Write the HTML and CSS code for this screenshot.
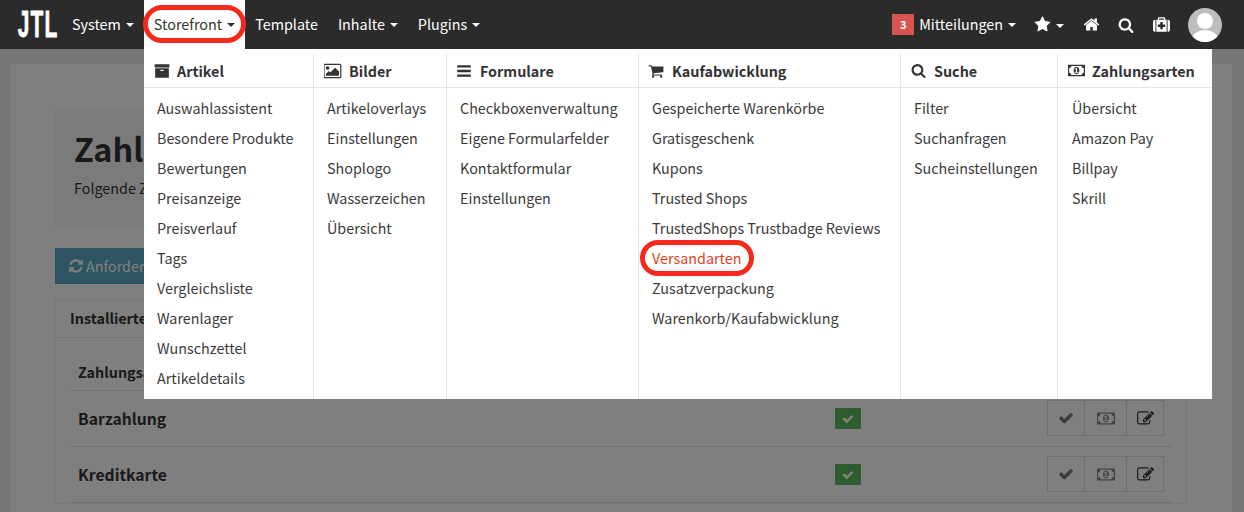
FILE: index.html
```html
<!DOCTYPE html>
<html lang="de">
<head>
<meta charset="utf-8">
<title>JTL Shop Admin</title>
<link rel="stylesheet" href="styles.css">
</head>
<body>
<svg class="sprite" xmlns="http://www.w3.org/2000/svg">
<symbol id="i-search" viewBox="0 0 1792 1792"><path d="M1216 832q0-185-131.5-316.5t-316.5-131.5-316.5 131.5-131.5 316.5 131.5 316.5 316.5 131.5 316.5-131.5 131.5-316.5zm512 832q0 52-38 90t-90 38q-54 0-90-38l-343-342q-179 124-399 124-143 0-273.5-55.5t-225-150-150-225-55.5-273.5 55.5-273.5 150-225 225-150 273.5-55.5 273.5 55.5 225 150 150 225 55.5 273.5q0 220-124 399l343 343q37 37 37 90z"/></symbol>
<symbol id="i-check" viewBox="0 0 1792 1792"><path d="M1671 566q0 40-28 68l-724 724-136 136q-28 28-68 28t-68-28l-136-136-362-362q-28-28-28-68t28-68l136-136q28-28 68-28t68 28l294 295 656-657q28-28 68-28t68 28l136 136q28 28 28 68z"/></symbol>
<symbol id="i-star" viewBox="0 0 1792 1792"><path d="M1728 647q0 22-26 48l-363 354 86 500q1 7 1 20 0 21-10.5 35.5t-30.5 14.5q-19 0-40-12l-449-236-449 236q-22 12-40 12-21 0-31.5-14.5t-10.5-35.5q0-6 2-20l86-500-364-354q-25-27-25-48 0-37 56-46l502-73 225-455q19-41 49-41t49 41l225 455 502 73q56 9 56 46z"/></symbol>
<symbol id="i-home" viewBox="0 0 1792 1792"><path d="M1472 992v480q0 26-19 45t-45 19h-384v-384h-256v384h-384q-26 0-45-19t-19-45v-480q0-1 .5-3t.5-3l575-474 575 474q1 2 1 6zm223-69l-62 74q-8 9-21 11h-3q-13 0-21-7l-692-577-692 577q-12 8-24 7-13-2-21-11l-62-74q-8-10-7-23.5t11-21.5l719-599q32-26 76-26t76 26l244 204v-195q0-14 9-23t23-9h192q14 0 23 9t9 23v408l219 182q10 8 11 21.5t-7 23.5z"/></symbol>
<symbol id="i-bars" viewBox="0 0 1792 1792"><path d="M1664 1344v128q0 26-19 45t-45 19h-1408q-26 0-45-19t-19-45v-128q0-26 19-45t45-19h1408q26 0 45 19t19 45zm0-512v128q0 26-19 45t-45 19h-1408q-26 0-45-19t-19-45v-128q0-26 19-45t45-19h1408q26 0 45 19t19 45zm0-512v128q0 26-19 45t-45 19h-1408q-26 0-45-19t-19-45v-128q0-26 19-45t45-19h1408q26 0 45 19t19 45z"/></symbol>
<symbol id="i-cart" viewBox="0 0 1792 1792"><path d="M704 1536q0 52-38 90t-90 38-90-38-38-90 38-90 90-38 90 38 38 90zm896 0q0 52-38 90t-90 38-90-38-38-90 38-90 90-38 90 38 38 90zm128-1088v512q0 24-16.5 42.5t-40.5 21.5l-1044 122q13 60 13 70 0 16-24 64h920q26 0 45 19t19 45-19 45-45 19h-1024q-26 0-45-19t-19-45q0-11 8-31.5t16-36 21.5-40 15.5-29.5l-177-823h-204q-26 0-45-19t-19-45 19-45 45-19h256q16 0 28.5 6.5t19.5 15.5 13 24.5 8 26 5.5 29.5 4.5 26h1201q26 0 45 19t19 45z"/></symbol>
<symbol id="i-archive" viewBox="0 0 1792 1792"><path d="M1088 832q0-26-19-45t-45-19h-256q-26 0-45 19t-19 45 19 45 45 19h256q26 0 45-19t19-45zm576-192v960q0 26-19 45t-45 19h-1408q-26 0-45-19t-19-45v-960q0-26 19-45t45-19h1408q26 0 45 19t19 45zm64-448v256q0 26-19 45t-45 19h-1536q-26 0-45-19t-19-45v-256q0-26 19-45t45-19h1536q26 0 45 19t19 45z"/></symbol>
<symbol id="i-refresh" viewBox="0 0 1792 1792"><path d="M1639 1056q0 5-1 7-64 268-268 434.5t-478 166.5q-146 0-282.5-55t-243.5-157l-129 129q-19 19-45 19t-45-19-19-45v-448q0-26 19-45t45-19h448q26 0 45 19t19 45-19 45l-137 137q71 66 161 102t187 36q134 0 250-65t186-179q11-17 53-117 8-23 30-23h192q13 0 22.5 9.5t9.5 22.5zm25-800v448q0 26-19 45t-45 19h-448q-26 0-45-19t-19-45 19-45l138-138q-148-137-349-137-134 0-250 65t-186 179q-11 17-53 117-8 23-30 23h-199q-13 0-22.5-9.5t-9.5-22.5v-7q65-268 270-434.5t480-166.5q146 0 284 55.5t245 156.5l130-129q19-19 45-19t45 19 19 45z"/></symbol>
<symbol id="i-image" viewBox="0 0 1920 1792"><path d="M576 576q0 80-56 136t-136 56-136-56-56-136 56-136 136-56 136 56 56 136zm1024 384v448h-1408v-192l320-320 160 160 512-512zm96-704h-1600q-13 0-22.5 9.5t-9.5 22.5v1216q0 13 9.5 22.5t22.5 9.5h1600q13 0 22.5-9.5t9.5-22.5v-1216q0-13-9.5-22.5t-22.5-9.5zm160 32v1216q0 66-47 113t-113 47h-1600q-66 0-113-47t-47-113v-1216q0-66 47-113t113-47h1600q66 0 113 47t47 113z"/></symbol>
<symbol id="i-money" viewBox="0 0 1920 1792"><path d="M768 1152h384v-96h-128v-448h-114l-148 137 77 80q42-37 55-57h2v288h-128v96zm512-256q0 70-21 142t-59.5 134-101.5 101-138 39-138-39-101.5-101-59.5-134-21-142 21-142 59.5-134 101.5-101 138-39 138 39 101.5 101 59.5 134 21 142zm512 256v-512q-106 0-181-75t-75-181h-1152q0 106-75 181t-181 75v512q106 0 181 75t75 181h1152q0-106 75-181t181-75zm128-832v1152q0 26-19 45t-45 19h-1792q-26 0-45-19t-19-45v-1152q0-26 19-45t45-19h1792q26 0 45 19t19 45z"/></symbol>
<symbol id="i-medkit" viewBox="0 0 1792 1792"><path d="M1280 1120v-192q0-14-9-23t-23-9h-224v-224q0-14-9-23t-23-9h-192q-14 0-23 9t-9 23v224h-224q-14 0-23 9t-9 23v192q0 14 9 23t23 9h224v224q0 14 9 23t23 9h192q14 0 23-9t9-23v-224h224q14 0 23-9t9-23zm-640-736h512v-128h-512v128zm-384 0v1280h-32q-92 0-158-66t-66-158v-832q0-92 66-158t158-66h32zm1184 0v1280h-1088v-1280h160v-160q0-40 28-68t68-28h576q40 0 68 28t28 68v160h160zm352 224v832q0 92-66 158t-158 66h-32v-1280h32q92 0 158 66t66 158z"/></symbol>
<symbol id="i-edit" viewBox="0 0 1792 1792"><path d="M888 1184l116-116-152-152-116 116v56h96v96h56zm440-720q-16-16-33 1l-350 350q-17 17-1 33t33-1l350-350q17-17 1-33zm80 594v190q0 119-84.5 203.5t-203.5 84.5h-832q-119 0-203.5-84.5t-84.5-203.5v-832q0-119 84.5-203.5t203.5-84.5h832q63 0 117 25 15 7 18 23 3 17-9 29l-49 49q-14 14-32 8-23-6-45-6h-832q-66 0-113 47t-47 113v832q0 66 47 113t113 47h832q66 0 113-47t47-113v-126q0-13 9-22l64-64q15-15 35-7t20 29zm-96-738l288 288-672 672h-288v-288zm444 132l-92 92-288-288 92-92q28-28 68-28t68 28l152 152q28 28 28 68t-28 68z"/></symbol>
</svg>

<header class="navbar">
  <a class="logo"><span class="logo-text">JTL</span></a>
  <nav class="nav-main">
    <a class="nav-item">System<i class="caret"></i></a>
    <a class="nav-item is-open">Storefront<i class="caret"></i></a>
    <a class="nav-item">Template</a>
    <a class="nav-item">Inhalte<i class="caret"></i></a>
    <a class="nav-item">Plugins<i class="caret"></i></a>
  </nav>
  <div class="nav-right">
    <span class="badge-count">3</span>
    <a class="nav-link">Mitteilungen<i class="caret"></i></a>
    <a class="nav-icon nav-star"><svg class="icon-star"><use href="#i-star"/></svg><i class="caret caret-small"></i></a>
    <a class="nav-icon nav-home"><svg class="icon-home"><use href="#i-home"/></svg></a>
    <a class="nav-icon nav-search"><svg class="icon-search"><use href="#i-search"/></svg></a>
    <a class="nav-icon nav-medkit"><svg class="icon-medkit"><use href="#i-medkit"/></svg></a>
    <span class="avatar">
      <svg viewBox="0 0 34 34"><circle cx="17" cy="13" r="8"/><ellipse cx="17" cy="31" rx="13" ry="9"/></svg>
    </span>
  </div>
</header>

<main class="page">
  <section class="card">
    <div class="jumbotron">
      <h1>Zahlungsarten</h1>
      <p>Folgende Zahlungsarten sind verfügbar</p>
    </div>
    <a class="btn-info"><svg class="icon-refresh"><use href="#i-refresh"/></svg>Anforderungen</a>
    <div class="panel">
      <div class="panel-head">Installierte Zahlungsarten</div>
      <div class="panel-body">
        <div class="row row-head">Zahlungsart</div>
        <div class="row">
          <span class="row-name">Barzahlung</span>
          <span class="ok"><svg><use href="#i-check"/></svg></span>
          <span class="btn-group">
            <a class="btn btn-a"><svg class="b-check"><use href="#i-check"/></svg></a>
            <a class="btn btn-b"><svg class="b-money"><use href="#i-money"/></svg></a>
            <a class="btn btn-c"><svg class="b-edit"><use href="#i-edit"/></svg></a>
          </span>
        </div>
        <div class="row">
          <span class="row-name">Kreditkarte</span>
          <span class="ok"><svg><use href="#i-check"/></svg></span>
          <span class="btn-group">
            <a class="btn btn-a"><svg class="b-check"><use href="#i-check"/></svg></a>
            <a class="btn btn-b"><svg class="b-money"><use href="#i-money"/></svg></a>
            <a class="btn btn-c"><svg class="b-edit"><use href="#i-edit"/></svg></a>
          </span>
        </div>
      </div>
    </div>
  </section>
</main>

<div class="backdrop"></div>

<div class="mega">
  <div class="col col-1">
    <h3><svg class="h-archive"><use href="#i-archive"/></svg>Artikel</h3>
    <ul>
      <li>Auswahlassistent</li><li>Besondere Produkte</li><li>Bewertungen</li><li>Preisanzeige</li><li>Preisverlauf</li><li>Tags</li><li>Vergleichsliste</li><li>Warenlager</li><li>Wunschzettel</li><li>Artikeldetails</li>
    </ul>
  </div>
  <div class="col col-2">
    <h3><svg class="h-image"><use href="#i-image"/></svg>Bilder</h3>
    <ul>
      <li>Artikeloverlays</li><li>Einstellungen</li><li>Shoplogo</li><li>Wasserzeichen</li><li>Übersicht</li>
    </ul>
  </div>
  <div class="col col-3">
    <h3><svg class="h-bars"><use href="#i-bars"/></svg>Formulare</h3>
    <ul>
      <li>Checkboxenverwaltung</li><li>Eigene Formularfelder</li><li>Kontaktformular</li><li>Einstellungen</li>
    </ul>
  </div>
  <div class="col col-4">
    <h3><svg class="h-cart"><use href="#i-cart"/></svg>Kaufabwicklung</h3>
    <ul>
      <li>Gespeicherte Warenkörbe</li><li>Gratisgeschenk</li><li>Kupons</li><li>Trusted Shops</li><li>TrustedShops Trustbadge Reviews</li><li class="is-current">Versandarten</li><li>Zusatzverpackung</li><li>Warenkorb/Kaufabwicklung</li>
    </ul>
  </div>
  <div class="col col-5">
    <h3><svg class="h-search"><use href="#i-search"/></svg>Suche</h3>
    <ul>
      <li>Filter</li><li>Suchanfragen</li><li>Sucheinstellungen</li>
    </ul>
  </div>
  <div class="col col-6">
    <h3><svg class="h-money"><use href="#i-money"/></svg>Zahlungsarten</h3>
    <ul>
      <li>Übersicht</li><li>Amazon Pay</li><li>Billpay</li><li>Skrill</li>
    </ul>
  </div>
</div>

<div class="mark mark-nav"></div>
<div class="mark mark-item"></div>
</body>
</html>
```

FILE: styles.css
```css
* { box-sizing: border-box; }
html, body { margin: 0; height: 512px; overflow: hidden; }
body {
  font-family: "Noto Sans CJK SC", "Noto Sans", sans-serif;
  font-size: 14.35px;
  line-height: 22px;
  color: #333;
  background: #ececec;
  position: relative;
}
.sprite { display: none; }
svg { fill: currentColor; display: block; }

/* navbar */
.navbar {
  position: relative;
  z-index: 5;
  height: 49px;
  background: #2b2b2b;
  color: #fff;
  display: flex;
  align-items: stretch;
}
.logo { width: 62px; display: flex; align-items: center; justify-content: center; padding-left: 13px; }
.logo-text {
  display: block;
  font-family: "Liberation Sans", sans-serif;
  font-weight: 700;
  font-size: 36px;
  line-height: 26px;
  transform: scaleX(.58);
  letter-spacing: 2px;
  -webkit-text-stroke: .8px #fff;
}
.nav-main { display: flex; }
.nav-item { display: flex; align-items: center; padding: 0 10px 1px; }
.is-open { background: #fff; color: #333; }
.caret {
  display: inline-block;
  width: 0; height: 0;
  margin-left: 5px; margin-top: 2px;
  border-top: 4px solid currentColor;
  border-left: 4px solid transparent;
  border-right: 4px solid transparent;
}
.caret-small { margin-left: 5px; }
.nav-right { margin-left: auto; display: flex; align-items: center; padding-right: 22px; }
.badge-count {
  width: 22px; height: 21px;
  background: #d9534f;
  color: #fff;
  font-size: 11px; font-weight: 700; line-height: 21px;
  text-align: center;
  margin-right: 5px;
}
.nav-link { display: flex; align-items: center; padding-bottom: 1px; }
.nav-icon { display: flex; align-items: center; }
.nav-star { margin-left: 18px; }
.icon-star { width: 17px; height: 17px; }
.nav-home { margin-left: 19px; }
.icon-home { width: 17px; height: 17px; }
.nav-search { margin-left: 18px; }
.icon-search { width: 16px; height: 16px; }
.nav-medkit { margin-left: 19px; }
.icon-medkit { width: 17px; height: 17px; }
.avatar {
  width: 34px; height: 34px;
  border-radius: 50%;
  background: #bdbdbd;
  margin-left: 18px;
  overflow: hidden;
}
.avatar svg { width: 34px; height: 34px; fill: #fff; }

/* page behind the backdrop */
.page { padding: 15px 12px 0 10px; }
.card {
  background: #fff;
  padding: 45px 45px 0;
  height: 460px;
}
.jumbotron {
  background: #f6f6f6;
  height: 118px;
  padding: 15px 19px;
  margin-bottom: 21px;
  width: 1132px;
}
.jumbotron h1 { margin: 0; font-size: 32.4px; line-height: 48px; font-weight: 700; color: #333; }
.jumbotron p { margin: 5px 0 0; }
.btn-info {
  display: inline-flex; align-items: center;
  height: 36px;
  background: #5aa9c4;
  color: #fff;
  padding: 0 13px;
  margin-bottom: 15px;
}
.icon-refresh { width: 16px; height: 16px; margin-right: 2px; }
.panel { width: 1132px; border: 1px solid #f0f0f0; }
.panel-head { height: 38px; padding: 0 14px; font-weight: 700; line-height: 35px; border-bottom: 1px solid #ececec; }
.panel-body { padding: 0 14px; }
.row {
  display: flex; align-items: center;
  height: 56px;
  border-bottom: 1px solid #e0e0e0;
  padding: 0 8px;
  position: relative;
}
.row-head { height: 53px; font-weight: 700; padding-top: 15px; }
.row-name { font-size: 15.7px; font-weight: 700; width: 757px; }
.ok {
  width: 26px; height: 21px;
  background: #5cb85c;
  color: #fff;
  display: flex; align-items: center; justify-content: center;
}
.ok svg { width: 12px; height: 12px; }
.btn-group { margin-left: auto; display: flex; margin-top: -1px; }
.btn {
  height: 36px;
  border: 1px solid #ddd;
  margin-left: -1px;
  display: flex; align-items: center; justify-content: center;
  color: #888;
}
.btn-a { width: 38px; color: #777; }
.btn-b { width: 43px; }
.btn-c { width: 38px; color: #333; }
.b-check { width: 16px; height: 16px; }
.b-money { width: 18px; height: 17px; }
.b-edit { width: 17px; height: 17px; }

/* dim layer */
.backdrop {
  position: absolute;
  left: 0; right: 0; top: 49px; bottom: 0;
  background: rgba(0, 0, 0, .5);
  z-index: 2;
}

/* mega menu */
.mega {
  position: absolute;
  left: 144px; top: 49px;
  width: 1068px; height: 350px;
  background: #fff;
  z-index: 3;
  display: flex;
  padding-top: 5px;
}
.col { border-right: 1px solid #e6e6e6; }
.col-1 { width: 170px; }
.col-2 { width: 133px; }
.col-3 { width: 192px; }
.col-4 { width: 262px; }
.col-5 { width: 157px; }
.col-6 { width: 154px; border-right: 0; }
.col h3 {
  margin: 0;
  height: 34px;
  display: flex; align-items: center;
  font-size: 14.35px; font-weight: 700;
  color: #333;
  border-bottom: 1px solid #e6e6e6;
}
.col h3 svg { flex: none; margin-right: 7px; }
.h-archive { width: 16px; height: 16px; }
.col-1 h3 { padding-left: 10px; }
.h-image { width: 18px; height: 18px; }
.col-2 h3 { padding-left: 10px; }
.h-bars { width: 16px; height: 16px; }
.col-3 h3 { padding-left: 9px; }
.col-3 h3 .h-bars { margin-right: 8px; }
.h-cart { width: 16px; height: 16px; }
.col-4 h3 { padding-left: 9px; }
.col-4 h3 .h-cart { margin-right: 8px; }
.h-search { width: 15px; height: 15px; }
.col-5 h3 { padding-left: 10px; }
.col-5 h3 .h-search { margin-right: 8px; }
.h-money { width: 17px; height: 17px; }
.col-6 h3 { padding-left: 10px; }
.col ul { list-style: none; margin: 0; padding: 5px 0 0 13px; }
.col-6 ul { padding-left: 14px; }
.col li { height: 30px; line-height: 29px; white-space: nowrap; color: #3a3a3a; }
.col .is-current { color: #e2401c; }

/* hand-drawn red circles */
.mark {
  position: absolute;
  border: 5px solid #f5291c;
  z-index: 6;
  border-radius: 20px;
}
.mark-nav { left: 143px; top: 5px; width: 103px; height: 38px; }
.mark-item { left: 640px; top: 240px; width: 114px; height: 36px; }
```
